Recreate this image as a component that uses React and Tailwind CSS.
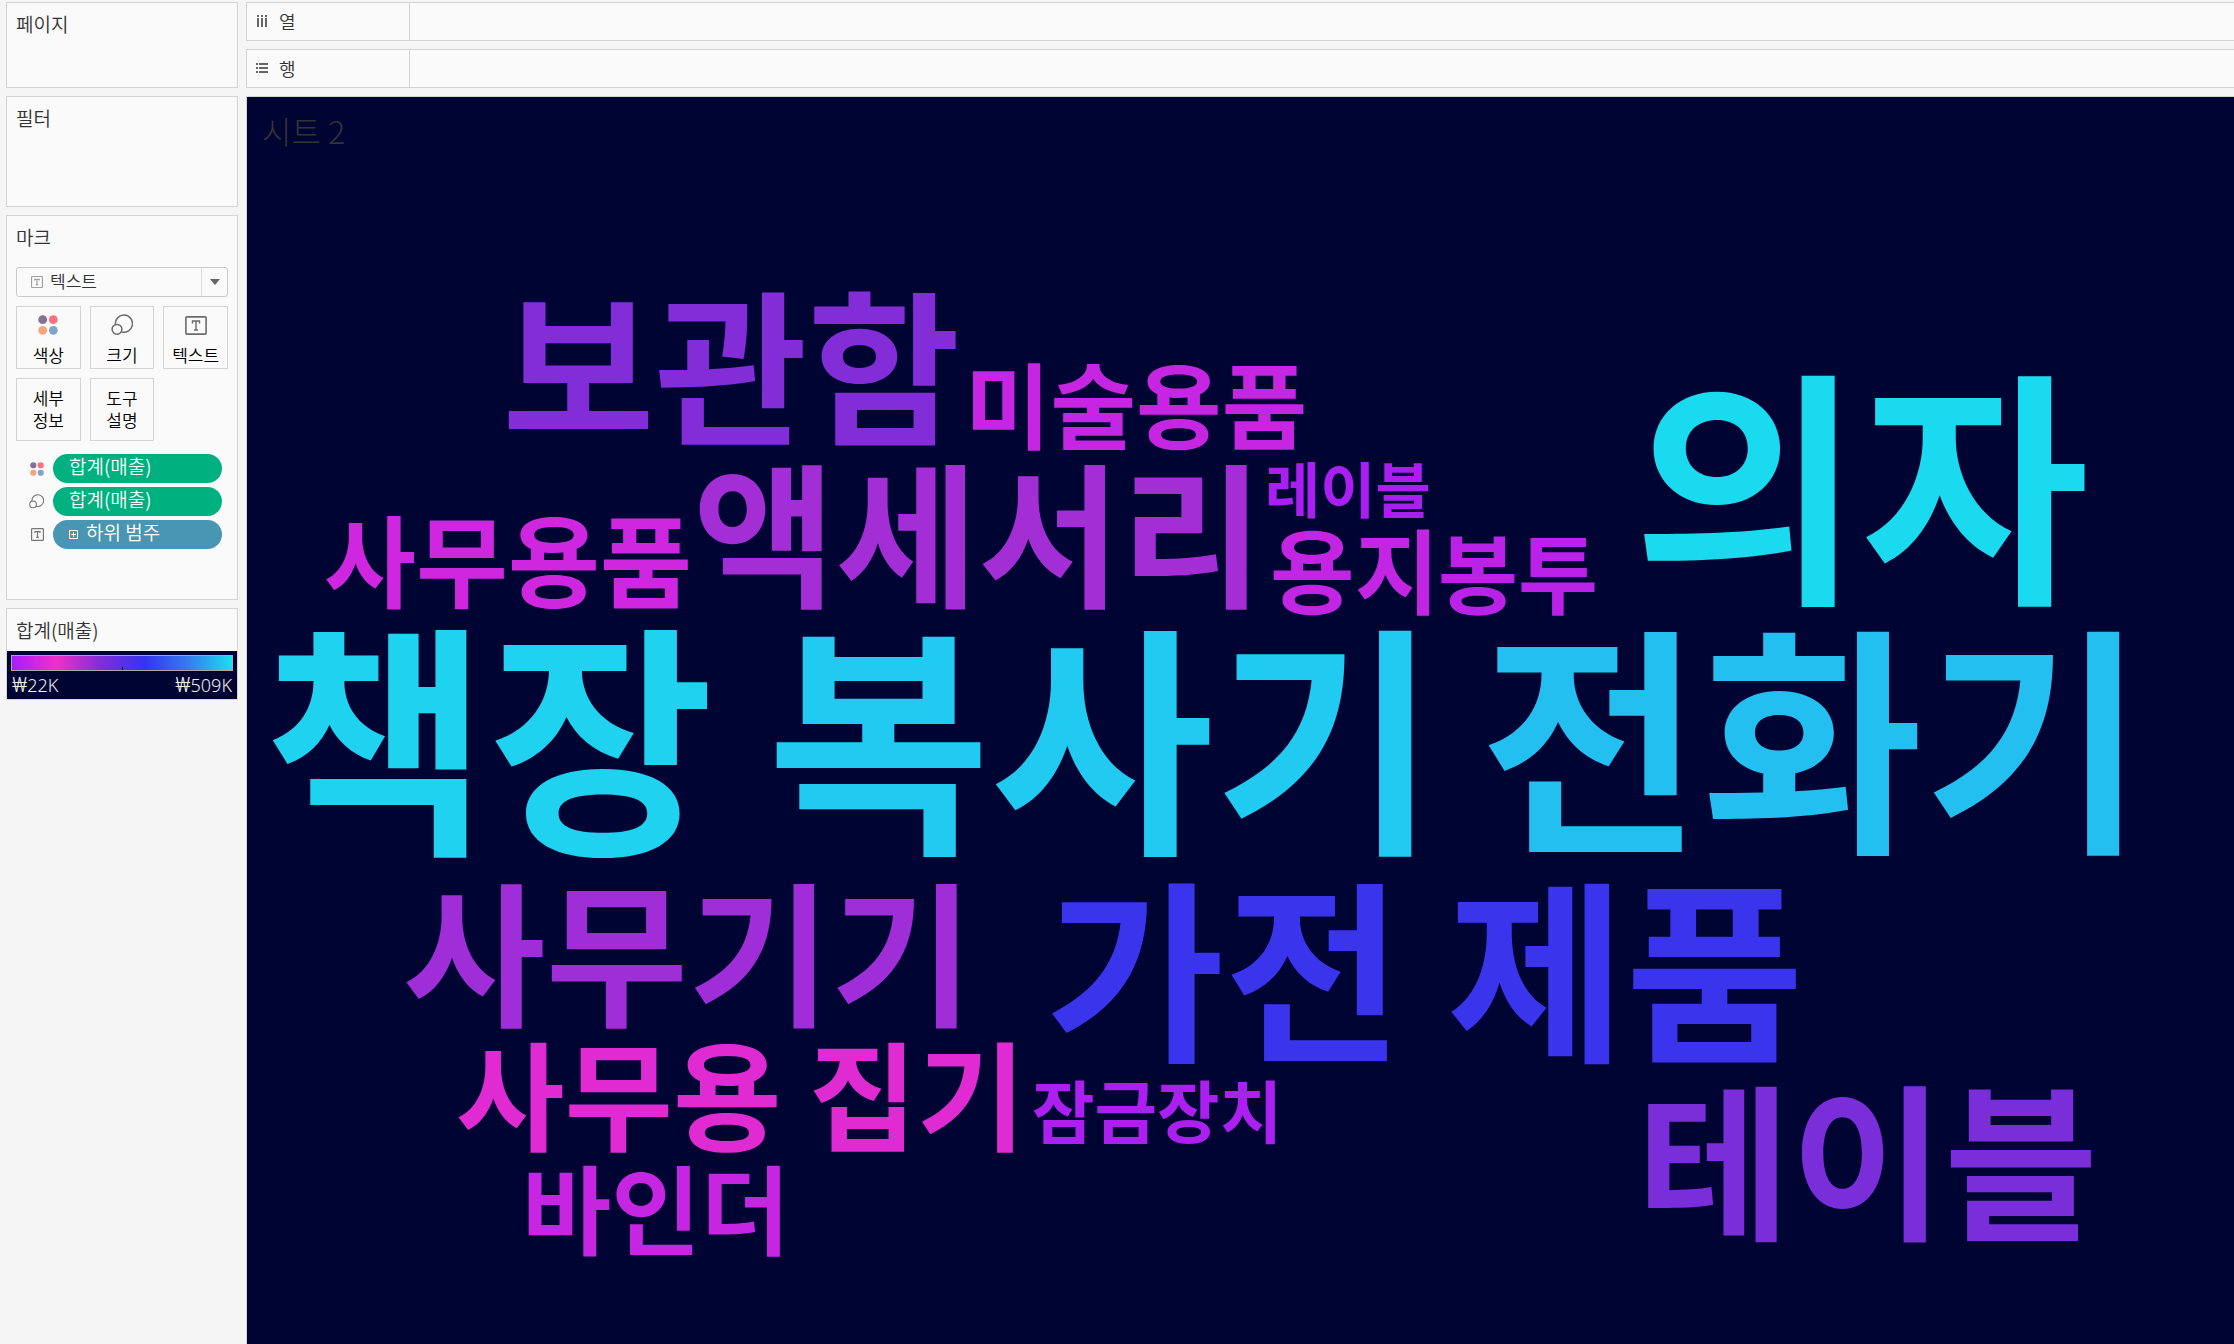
import React from "react";

const WORDS = [
  ["보관함", "left-[255px] top-[180px] text-[166px] text-[#832dd9]"],
  ["미술용품", "left-[718px] top-[258px] text-[93px] text-[#c626e2]"],
  ["의자", "left-[1386px] top-[255px] text-[248px] text-[#1adaf0]"],
  ["액세서리", "left-[446px] top-[353px] text-[155px] text-[#a42ed6]"],
  ["레이블", "left-[1018px] top-[360px] text-[60px] text-[#a91ff2]"],
  ["사무용품", "left-[77px] top-[410px] text-[100px] text-[#ce27df]"],
  ["용지", "left-[1023px] top-[424px] text-[92px] text-[#c326e3]"],
  ["봉투", "left-[1191px] top-[430px] text-[87px] text-[#bb22e8]"],
  ["책장", "left-[16px] top-[510px] text-[245px] text-[#1fd2f0]"],
  ["복사기", "left-[520px] top-[511px] text-[243px] text-[#21caf1]"],
  ["전화기", "left-[1233px] top-[511px] text-[241px] text-[#24bff1]"],
  ["사무기기", "left-[156px] top-[772px] text-[155px] text-[#9f2ed8]"],
  ["가전 제품", "left-[799px] top-[769px] text-[194px] text-[#3a34ec]"],
  ["사무용 집기", "left-[209px] top-[935px] text-[118px] text-[#e12bd2]"],
  ["잠금장치", "left-[785px] top-[978px] text-[68px] text-[#ab1fef]"],
  ["바인더", "left-[275px] top-[1059px] text-[97px] text-[#c626e2]"],
  ["테이블", "left-[1390px] top-[974px] text-[167px] text-[#7a2eda]"],
];

function ColorIcon({ className }) {
  return (
    <svg viewBox="0 0 20 20" className={className} aria-hidden="true">
      <circle cx="4.7" cy="4.7" r="4.4" fill="#85709a" />
      <circle cx="15.3" cy="4.7" r="4.4" fill="#fa7080" />
      <circle cx="4.7" cy="15.3" r="4.4" fill="#f5a57c" />
      <circle cx="15.3" cy="15.3" r="4.4" fill="#80a3cc" />
    </svg>
  );
}

function SizeIcon({ className }) {
  return (
    <svg viewBox="0 0 22 22" className={className} fill="none" stroke="#6b6b6b" strokeWidth="1.5" aria-hidden="true">
      <path d="M4.3 10.2A8.6 8.6 0 1 1 10.6 18" />
      <circle cx="6" cy="15.3" r="4.9" />
    </svg>
  );
}

function TextIcon({ className }) {
  return (
    <svg viewBox="0 0 22 19" className={className} fill="none" stroke="currentColor" aria-hidden="true">
      <rect x="0.9" y="0.9" width="20.2" height="17.2" rx="0.8" strokeWidth="1.6" />
      <path d="M7.5 7.4V5h7v2.4M11 5v9M9 14h4" strokeWidth="1.4" />
    </svg>
  );
}

function SmallTextIcon({ className }) {
  return (
    <svg viewBox="0 0 13 13" className={className} fill="none" stroke="currentColor" aria-hidden="true">
      <rect x="0.6" y="0.6" width="11.8" height="11.8" rx="0.6" strokeWidth="1.2" />
      <path d="M4 5V3.7h5V5M6.5 3.7v5.6M5.2 9.3h2.6" strokeWidth="1.2" />
    </svg>
  );
}

function Card({ title, className, children }) {
  return (
    <section className={`flex flex-col border border-[#d4d4d4] bg-[#fafafa] ${className}`}>
      <h2 className="px-[9px] pt-[7px] text-[19px] leading-[28px]">{title}</h2>
      {children}
    </section>
  );
}

function MarkButton({ icon, children }) {
  return (
    <button type="button" className="flex h-[63px] flex-col items-center justify-end border border-[#d4d4d4] text-[17px] leading-[22px] text-black">
      {icon}
      <span className={icon ? "pb-[2px]" : "m-auto w-9 pb-[2px]"}>{children}</span>
    </button>
  );
}

function Pill({ icon, color, children }) {
  return (
    <li className="flex items-center">
      <span className="flex w-[37px] justify-end pr-[9px]">{icon}</span>
      <button type="button" className={`flex h-[29px] flex-1 items-center gap-2 rounded-full px-4 pb-[5px] text-[19px] leading-[24px] text-white ${color}`}>
        {children}
      </button>
    </li>
  );
}

function Amount({ children }) {
  return (
    <span>
      <span className="font-['Roboto',sans-serif] text-[20px]">₩</span>
      {children}
    </span>
  );
}

function Shelf({ icon, label }) {
  return (
    <div className="flex h-[39px] border border-r-0 border-[#d4d4d4] bg-[#fafafa]">
      <div className="flex w-[163px] items-center gap-[11px] border-r border-[#d4d4d4] pb-px pl-[9px] text-[18px]">
        {icon}
        <span>{label}</span>
      </div>
    </div>
  );
}

export default function App() {
  return (
    <div className="flex min-h-screen gap-2 bg-[#f5f5f5] pl-[6px] pt-[2px] font-['Noto_Sans_CJK_KR',sans-serif] font-[350] text-[#333]">
      <aside className="flex w-[232px] shrink-0 flex-col gap-2">
        <Card title="페이지" className="h-[86px]" />
        <Card title="필터" className="h-[111px]" />
        <Card title="마크" className="h-[385px]">
          <div className="flex flex-col gap-[9px] px-[9px] pt-4">
            <div className="relative">
              <select aria-label="마크 유형" className="block h-[30px] w-full appearance-none rounded-[3px] border border-[#cacaca] bg-transparent pb-[2px] pl-[33px] text-[17px]">
                <option>텍스트</option>
              </select>
              <SmallTextIcon className="pointer-events-none absolute left-[15px] top-[9px] h-[12px] w-[12px] text-[#a0a0a0]" />
              <span className="pointer-events-none absolute inset-y-px right-px flex w-[26px] items-center justify-center border-l border-[#dcdcdc]">
                <svg viewBox="0 0 10 6" className="h-[6px] w-[10px]" aria-hidden="true">
                  <path d="M0 0h10L5 6z" fill="#666" />
                </svg>
              </span>
            </div>
            <div className="grid grid-cols-3 gap-[9px]">
              <MarkButton icon={<ColorIcon className="mb-[9px] h-5 w-5" />}>색상</MarkButton>
              <MarkButton icon={<SizeIcon className="mb-2 h-[22px] w-[22px]" />}>크기</MarkButton>
              <MarkButton icon={<TextIcon className="mb-[9px] h-[19px] w-[22px] text-[#6b6b6b]" />}>텍스트</MarkButton>
              <MarkButton>세부 정보</MarkButton>
              <MarkButton>도구 설명</MarkButton>
            </div>
          </div>
          <ul className="flex flex-col gap-1 pl-[9px] pr-[15px] pt-[13px]">
            <Pill color="bg-[#00b180]" icon={<ColorIcon className="h-[14px] w-[14px]" />}>합계(매출)</Pill>
            <Pill color="bg-[#00b180]" icon={<SizeIcon className="h-[15px] w-[15px]" />}>합계(매출)</Pill>
            <Pill color="bg-[#4996b2]" icon={<SmallTextIcon className="h-[13px] w-[13px] text-[#777]" />}>
              <svg viewBox="0 0 9 9" className="mt-1 h-[9px] w-[9px]" fill="none" stroke="currentColor" aria-hidden="true">
                <path d="M.5.5h8v8h-8zM4.5 2.2v4.6M2.2 4.5h4.6" />
              </svg>
              하위 범주
            </Pill>
          </ul>
        </Card>
        <Card title="합계(매출)" className="h-[92px]">
          <div className="mt-[7px] flex-1 bg-[#000433] px-1 pt-1 text-[#eee]">
            <div className="flex h-4 items-end justify-center border border-[#a8a8a8] bg-[linear-gradient(90deg,#a91cff_0%,#f030c8_20%,#832dd9_40%,#3434f0_60%,#347cf0_80%,#1adff0_100%)]">
              <span className="h-[3px] w-px bg-black" />
            </div>
            <div className="flex justify-between px-px font-['Noto_Sans',sans-serif] text-[18px] font-light leading-[28px]">
              <Amount>22K</Amount>
              <Amount>509K</Amount>
            </div>
          </div>
        </Card>
      </aside>
      <main className="flex min-w-0 flex-1 flex-col gap-2 overflow-hidden">
        <Shelf
          label="열"
          icon={
            <svg viewBox="0 0 12 12" className="h-3 w-3" fill="#666" aria-hidden="true">
              <path d="M1 0h2v2H1zM5 0h2v2H5zM9 0h2v2H9zM1 3h2v9H1zM5 3h2v9H5zM9 3h2v9H9z" />
            </svg>
          }
        />
        <Shelf
          label="행"
          icon={
            <svg viewBox="0 0 12 12" className="h-3 w-3" fill="#666" aria-hidden="true">
              <path d="M0 1h2v2H0zM0 5h2v2H0zM0 9h2v2H0zM3 1h9v2H3zM3 5h9v2H3zM3 9h9v2H3z" />
            </svg>
          }
        />
        <section className="relative flex-1 overflow-hidden border-l border-t border-[#d4d4d4] bg-[#000433]">
          <h1 className="pl-[15px] pt-[13px] text-[32px] font-light leading-[40px] text-[#333]">시트 2</h1>
          {WORDS.map(([word, style]) => (
            <span key={word} className={`absolute whitespace-nowrap font-bold leading-none ${style}`}>
              {word}
            </span>
          ))}
        </section>
      </main>
    </div>
  );
}
